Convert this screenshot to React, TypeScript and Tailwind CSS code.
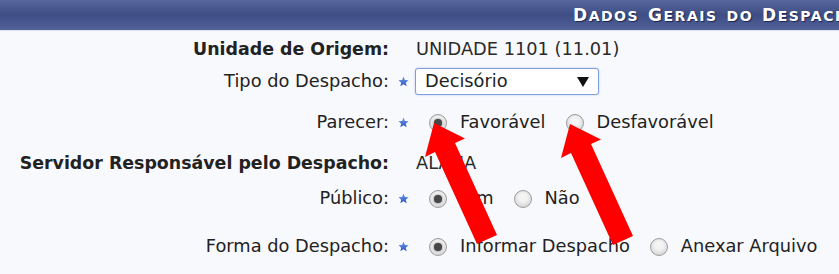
const FONT = "font-['DejaVu_Sans','Verdana',sans-serif]";

function Star() {
  return (
    <svg width="11" height="11" viewBox="0 0 24 24">
      <defs>
        <linearGradient id="st" x1="0" y1="0" x2="0" y2="1">
          <stop offset="0" stopColor="#6f9bf0" />
          <stop offset="1" stopColor="#2d56b8" />
        </linearGradient>
      </defs>
      <polygon points="12,1 15,8.8 23,9.3 17,14.5 19,22.5 12,18 5,22.5 7,14.5 1,9.3 9,8.8" fill="url(#st)" />
    </svg>
  );
}

function Radio({ checked, label }: { checked?: boolean; label: string }) {
  return (
    <span className="flex items-center">
      <span className="ml-[14px] mr-[13px] w-[18px] h-[18px] rounded-full border border-[#9c9c9c] bg-[radial-gradient(circle_at_50%_40%,#f4f4f4_30%,#c9c9c9)] flex items-center justify-center">
        {checked && <span className="w-[8px] h-[8px] rounded-full bg-[#474747] shadow-[0_0_2px_#555]" />}
      </span>
      <span className="mr-[6px]">{label}</span>
    </span>
  );
}

function Row({ h, label, bold, star, children }: { h: string; label: string; bold?: boolean; star?: boolean; children: React.ReactNode }) {
  return (
    <div className={`grid grid-cols-[389px_26px_1fr] items-center ${h}`}>
      <div className={`text-right whitespace-nowrap ${bold ? 'font-bold text-[17.4px]' : ''}`}>{label}</div>
      <div className="flex items-center pl-[9px]">{star && <Star />}</div>
      <div className="flex items-center whitespace-nowrap">{children}</div>
    </div>
  );
}

// small caps by hand: capital letters full size, the rest as smaller capitals
function Caps({ w, last }: { w: string; last?: boolean }) {
  const big = w[0] === w[0].toUpperCase();
  return (
    <span className={last ? '' : 'mr-[9px]'}>
      {big && <span className="text-[17px]">{w[0]}</span>}
      <span className="text-[14px] uppercase">{big ? w.slice(1) : w}</span>
    </span>
  );
}

export default function App() {
  return (
    <div className={`relative w-[839px] h-[274px] overflow-hidden bg-[#f8f9fd] text-[#222] text-[17.8px] ${FONT}`}>
      <div className="h-[31px] border-b border-[#dde2ef] bg-linear-to-b from-[#56679d] via-[#3e4d84] to-[#52629a] flex items-center pl-[573px] whitespace-nowrap overflow-hidden">
        <span className="font-bold tracking-[1.5px] text-white [text-shadow:1px_1px_1px_#1c2650] flex items-baseline pt-[1px]">
          <Caps w="Dados" />
          <Caps w="Gerais" />
          <Caps w="do" />
          <Caps w="Despacho" last />
        </span>
      </div>

      <Row h="h-[37px]" label="Unidade de Origem:" bold>
        <span className="pl-[1px] text-[#2a2a2a]">UNIDADE 1101 (11.01)</span>
      </Row>
      <Row h="h-[27px]" label="Tipo do Despacho:" star>
        <div className="w-[184px] h-[27px] bg-white border border-[#7d9fdc] rounded-[3px] shadow-[0_0_2px_#aac3f0] flex items-center justify-between pl-[9px] pr-[9px]">
          <span>Decisório</span>
          <svg width="12" height="10" viewBox="0 0 12 10"><polygon points="0,0 12,0 6,10" fill="#111" /></svg>
        </div>
      </Row>
      <Row h="h-[55px]" label="Parecer:" star>
        <Radio checked label="Favorável" />
        <Radio label="Desfavorável" />
      </Row>
      <Row h="h-[21px]" label="Servidor Responsável pelo Despacho:" bold>
        <span className="pl-[1px] text-[#2a2a2a]">ALANA</span>
      </Row>
      <Row h="h-[55px]" label="Público:" star>
        <Radio checked label="Sim" />
        <Radio label="Não" />
      </Row>
      <Row h="h-[41px]" label="Forma do Despacho:" star>
        <Radio checked label="Informar Despacho" />
        <Radio label="Anexar Arquivo" />
      </Row>

      <svg className="absolute inset-0 pointer-events-none" width="839" height="274" viewBox="0 0 839 274">
        <polygon points="434,123 465,138.5 455,143 497,235 477,244 435,152 425,157" fill="#ff0000" />
        <polygon points="570,124 601,139.5 591,144 633,236 613,245 571,153 561,158" fill="#ff0000" />
      </svg>
    </div>
  );
}
